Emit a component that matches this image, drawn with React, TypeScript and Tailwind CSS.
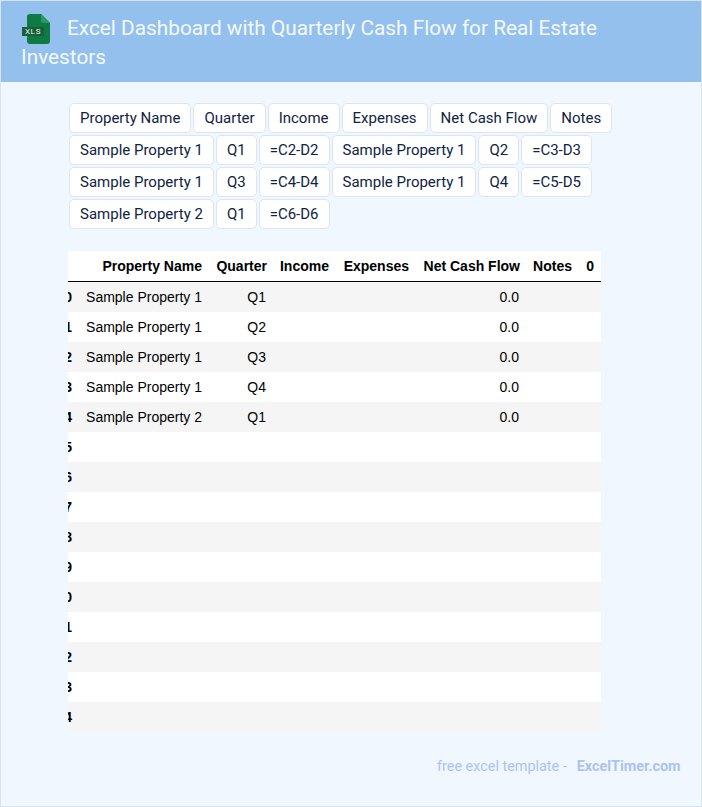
const tags = ["Property Name","Quarter","Income","Expenses","Net Cash Flow","Notes","Sample Property 1","Q1","=C2-D2","Sample Property 1","Q2","=C3-D3","Sample Property 1","Q3","=C4-D4","Sample Property 1","Q4","=C5-D5","Sample Property 2","Q1","=C6-D6"];
const heads = ["Property Name","Quarter","Income","Expenses","Net Cash Flow","Notes","0"];
const data: [string,string,string][] = [["Sample Property 1","Q1","0.0"],["Sample Property 1","Q2","0.0"],["Sample Property 1","Q3","0.0"],["Sample Property 1","Q4","0.0"],["Sample Property 2","Q1","0.0"]];
const rows = Array.from({length:15},(_,i)=>i);

function XlsIcon(){
  return (
    <svg width="30" height="30" viewBox="0 0 30 30" className="block">
      <path d="M9 0H20L29 9V27a3 3 0 0 1-3 3H9a3 3 0 0 1-3-3V3a3 3 0 0 1 3-3Z" fill="#0f7a43"/>
      <path d="M20 0L29 9H22a2 2 0 0 1-2-2Z" fill="#2a9a62"/>
      <rect x="1" y="13" width="22" height="9" fill="#17603a"/>
      <text x="12" y="20.4" textAnchor="middle" fontSize="8" fill="#e8f5ee" fontFamily="Roboto, sans-serif" letterSpacing="0.7">XLS</text>
    </svg>
  );
}

export default function App(){
  return (
    <div className="w-[702px] h-[807px] bg-[#f0f7ff] border border-[#d8e3f0] font-['Roboto',sans-serif] flex flex-col overflow-hidden">
      <header className="bg-[#93c0ec] h-[81px] pl-5 pr-5 pt-[13px] text-[20.8px] leading-[29px] text-[#f4f9ff]">
        <span className="inline-block w-[46px] h-[29px] align-top"><XlsIcon/></span>
        Excel Dashboard with Quarterly Cash Flow for Real Estate Investors
      </header>
      <main className="flex-1 flex flex-col pl-[67px] pr-[67px]">
        <div className="flex flex-wrap gap-[2px] pt-[21px] pl-px text-[15px] text-[#10233f]">
          {tags.map((t,i)=>(
            <span key={i} className="h-[30px] leading-[28px] px-[10px] bg-white border border-[#dbe5f1] rounded-[5px] whitespace-nowrap">{t}</span>
          ))}
        </div>
        <div className="mt-[22px] w-[533px] overflow-hidden bg-white font-['Liberation_Sans',sans-serif] text-[14px] text-black">
          <table className="ml-[-19px] border-separate border-spacing-0 table-fixed w-[552px]">
            <colgroup>
              <col className="w-[30px]"/><col className="w-[130px]"/><col className="w-[65px]"/><col className="w-[62px]"/><col className="w-[80px]"/><col className="w-[111px]"/><col className="w-[52px]"/><col className="w-[22px]"/>
            </colgroup>
            <thead>
              <tr className="h-[31px]">
                <th className="border-b border-black"></th>
                {heads.map(h=><th key={h} className="text-right font-bold pr-[7px] whitespace-nowrap border-b border-black">{h}</th>)}
              </tr>
            </thead>
            <tbody>
              {rows.map(i=>{
                const d = data[i];
                return (
                  <tr key={i} className={`h-[30px] ${i%2===0?"bg-[#f5f5f5]":"bg-white"}`}>
                    <th className="text-right font-bold pr-[7px]">{i}</th>
                    <td className="text-right pr-[7px] whitespace-nowrap">{d?d[0]:""}</td>
                    <td className="text-right pr-[8px]">{d?d[1]:""}</td>
                    <td></td>
                    <td></td>
                    <td className="text-right pr-[8px]">{d?d[2]:""}</td>
                    <td></td>
                    <td></td>
                  </tr>
                );
              })}
            </tbody>
          </table>
        </div>
        <footer className="mt-[26px] -mr-[46.5px] flex justify-end text-[14.4px] leading-[18px] text-[#abc2f2]">
          <span>free excel template -</span>
          <span className="ml-[10px] font-bold">ExcelTimer.com</span>
        </footer>
      </main>
    </div>
  );
}
